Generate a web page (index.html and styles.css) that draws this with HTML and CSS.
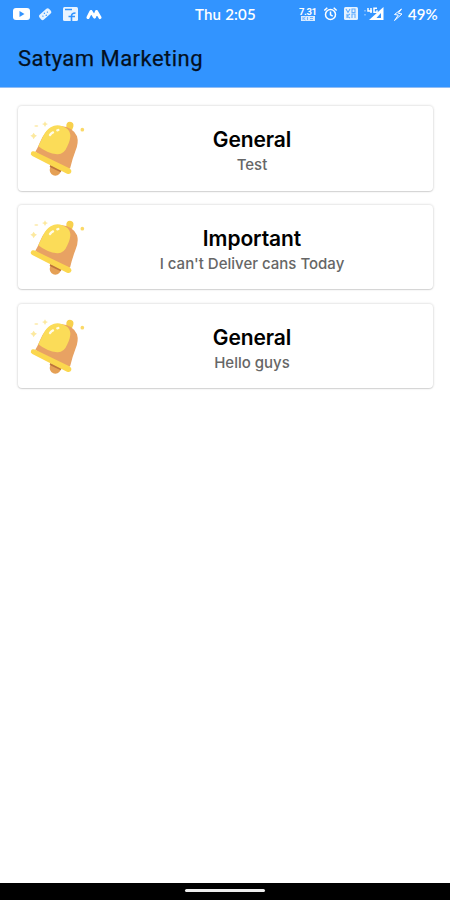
FILE: index.html
```html
<!DOCTYPE html>
<html lang="en">
<head>
<meta charset="utf-8">
<title>Satyam Marketing</title>
<link rel="stylesheet" href="styles.css">
</head>
<body>
<svg width="0" height="0" class="defs">
  <symbol id="bell" viewBox="0 0 186 186">
    <circle cx="88" cy="159" r="17" fill="#e5a055"/>
    <path fill="#bd743c" d="M73 143l34 17-3 6-33-16z"/>
    <path fill="#f8d04c" d="M121 28q-1-14 11-14 13 1 10 15l-5 13-16-6z"/>
    <path fill="#e8a263" d="M28 104q7-11 13-26 8-20 19-33 17-20 44-18 37 3 49 31 6 20-5 45-9 23-16 52-56-14-104-51z"/>
    <path fill="#fbdc58" d="M37 88q7-14 13-27 9-21 24-30 17-10 35-3 22 7 24 26 1 13-9 34-10 25-30 24-31-3-57-24z"/>
    <path fill="#fbd74e" d="M21 103q3-1 10 3l99 48q8 5 6 11-3 8-13 5L19 117q-7-4-4-10 2-4 6-4z"/>
    <path fill="none" stroke="#fffbe5" stroke-width="7" stroke-linecap="round" d="M72 54q4-6 9-8M94 40l3-1"/>
    <circle cx="169" cy="38" r="5.5" fill="#fbd968"/>
    <path fill="#fce99f" d="M23 47l4 6 6 3-6 4-4 7-4-7-6-4 6-3zM57 13l3 6 6 2-6 3-3 6-3-6-6-3 6-2z"/>
    <ellipse cx="31" cy="27" rx="6" ry="3" fill="#fdeeb9"/>
  </symbol>
</svg>
<header>
  <div class="status">
    <svg class="apps" width="92" height="28" viewBox="0 0 92 28">
      <rect x="0" y="8" width="17" height="12" rx="3" fill="#fff"/>
      <path d="M6.5 11l5 3-5 3z" fill="#3294ff"/>
      <g transform="rotate(-42 32 14)"><rect x="25.500" y="11" width="13" height="6.500" rx="2" fill="#e9f4ff"/><path d="M29 14.200h.1M32 13h.1M32 15.800h.1M35 14.200h.1" stroke="#3294ff" stroke-width="1.300" stroke-linecap="round"/></g>
      <rect x="50" y="7" width="15" height="14" rx="1.500" fill="#e9f4ff"/>
      <path d="M52 9.500h7M58.500 21v-5q0-3 4-3M55.500 16.500h6.500" stroke="#3294ff" stroke-width="1.600" fill="none"/>
      <path d="M75 17.500l3-6 3.500 5.500 2-5.500 3.500 6" stroke="#fff" stroke-width="3.100" fill="none" stroke-linejoin="round" stroke-linecap="round"/>
    </svg>
    <span class="time">Thu 2:05</span>
    <div class="system">
      <svg class="speed" width="18" height="28" viewBox="0 0 18 28">
        <text class="rate" x="0" y="14.500" textLength="18">7.31</text>
        <path d="M2 16h14v5H2z" fill="#d9ebff"/>
        <path d="M4 17v3M6.500 17l-2 1.500 2 1.500M8.500 17v3M11 17.500h3M11 19.500h3" fill="none" stroke="#5fabff" stroke-width=".9"/>
      </svg>
      <svg width="66" height="28" viewBox="0 0 66 28">
        <g fill="none" stroke="#fff" stroke-width="1.500">
          <circle cx="6.500" cy="14.500" r="5"/><path d="M6.500 11.500v3.300l2.200 1.400M.3 10.500l3-2.700M12.700 10.500l-3-2.700"/>
        </g>
        <rect x="20" y="7" width="14" height="13" rx="1.500" fill="#e5f2ff"/>
        <path d="M22 9l2 3.500L26 9M28 12.500V9h3v3.500zM23 14v4M23 16l3-2M23 16l3 2M28 18v-4h3v4" fill="none" stroke="#62adff" stroke-width="1.100"/>
        <path d="M59.500 7v13H45z" fill="#fff"/>
        <path d="M57 13v5h-4.500z" fill="#3294ff"/>
        <path d="M44 8v3h4M47 8v5M53 8.300h-3v4h3v-2" fill="none" stroke="#fff" stroke-width="1.500"/>
        <path d="M40 10h2v1.500h-2zM40 14h2v1.500h-2z" fill="#76b8ff"/>
      </svg>
      <svg class="bolt" width="10" height="28" viewBox="0 0 10 28"><path d="M8.500 9L1.500 14.500l3.800.6L1.500 20.500M8.500 9L5.300 13.300l3.700.7-7.500 6.500" fill="none" stroke="#fff" stroke-width="1"/></svg>
      <span class="battery">49%</span>
    </div>
  </div>
  <h1>Satyam Marketing</h1>
</header>
<main>
  <article><svg class="bell"><use href="#bell"/></svg><div class="copy"><h2>General</h2><p>Test</p></div></article>
  <article><svg class="bell"><use href="#bell"/></svg><div class="copy"><h2>Important</h2><p>I can't Deliver cans Today</p></div></article>
  <article><svg class="bell"><use href="#bell"/></svg><div class="copy"><h2>General</h2><p>Hello guys</p></div></article>
</main>
<footer><div class="handle"></div></footer>
</body>
</html>
```
FILE: styles.css
```css
* { box-sizing: border-box; }
body {
  margin: 0;
  height: 900px;
  display: flex;
  flex-direction: column;
  background: #fff;
  font-family: Inter, sans-serif;
  overflow: hidden;
}
svg { display: block; flex: none; }
.defs { position: absolute; }
header {
  height: 88px;
  flex: none;
  background: #3294ff;
  border-bottom: 1px solid #91bdf5;
}
.status {
  height: 28px;
  display: grid;
  grid-template-columns: 182px 61px 1fr;
  padding: 0 11px 0 13px;
  color: #fff;
  font: 600 15px/29px Lato, sans-serif;
}
.time { white-space: nowrap; letter-spacing: .2px; }
.system { display: flex; justify-content: flex-end; }
.speed { margin-right: 7px; }
.rate { font: 700 9.5px Roboto, sans-serif; fill: #fff; }
.bolt { margin: 0 5px 0 3px; }
.battery { width: 31px; white-space: nowrap; }
h1 {
  margin: 16px 0 0 18px;
  font: 400 22px/30px Roboto, sans-serif;
  letter-spacing: .47px;
  color: #03101f;
  -webkit-text-stroke: .25px #03101f;
}
main {
  flex: 1;
  display: flex;
  flex-direction: column;
  gap: 14.3px;
  padding: 18px 17px 0 18px;
}
article {
  height: 84.500px;
  flex: none;
  display: flex;
  align-items: flex-start;
  padding: 11px 22px 0 8px;
  border-radius: 4px;
  background: #fff;
  box-shadow: 0 0 2px 1px rgba(0, 0, 0, .1), 0 1px 1px rgba(0, 0, 0, .1);
}
.bell { width: 62px; height: 62px; }
.copy { flex: 1; padding: 9px 0 0 5px; text-align: center; }
h2 {
  margin: 0;
  font-size: 21px;
  line-height: 28px;
  font-weight: 600;
  letter-spacing: -.1px;
  color: #000;
}
p {
  margin: 0;
  font-size: 15px;
  line-height: 22px;
  font-weight: 500;
  letter-spacing: 0;
  color: #666;
}
footer {
  height: 17px;
  flex: none;
  display: flex;
  justify-content: center;
  background: #000;
}
.handle {
  width: 80px;
  height: 3px;
  margin-top: 6px;
  border-radius: 2px;
  background: #eee;
}
```
